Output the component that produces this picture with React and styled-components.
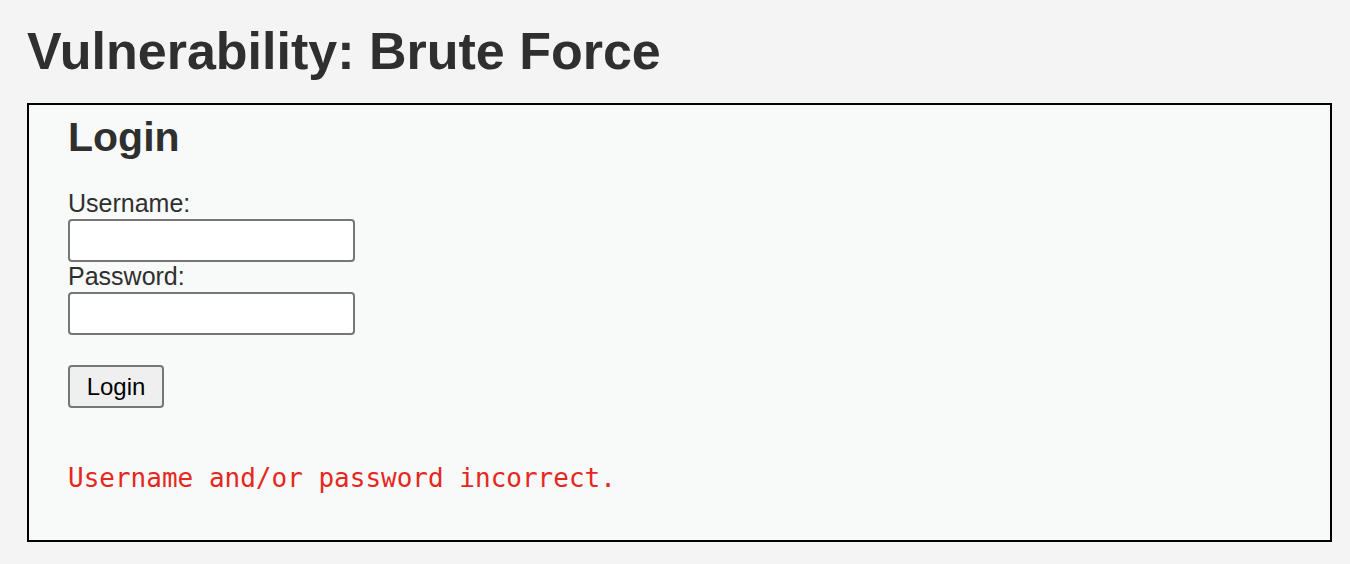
import styled, { createGlobalStyle } from 'styled-components';

const GlobalStyle = createGlobalStyle`
  html, body {
    margin: 0;
    padding: 0;
    background: #f4f4f4;
  }
  body {
    font-family: "Liberation Sans", Arial, Helvetica, sans-serif;
    color: #2f2f2f;
  }
`;

const Page = styled.div`
  padding: 21px 18px 0 27px;
`;

const Title = styled.h1`
  margin: 0 0 22px;
  font-size: 52px;
  line-height: 60px;
  font-weight: 700;
  color: #2f2f2f;
`;

const Panel = styled.div`
  border: 2px solid #000;
  background: #f8f9f9;
  padding: 8px 39px 0;
  height: 439px;
  box-sizing: border-box;
`;

const Subtitle = styled.h2`
  margin: 0 0 28px;
  font-size: 41px;
  line-height: 48px;
  font-weight: 700;
`;

const Form = styled.form`
  display: flex;
  flex-direction: column;
  align-items: flex-start;
`;

const Label = styled.label`
  display: block;
  font-size: 25px;
  line-height: 28px;
  margin-bottom: 2px;
`;

const Field = styled.input`
  width: 287px;
  height: 43px;
  box-sizing: border-box;
  border: 2px solid #767676;
  border-radius: 4px;
  background: #fff;
  margin: 0;
`;

const Button = styled.button`
  margin-top: 30px;
  height: 43px;
  width: 96px;
  box-sizing: border-box;
  border: 2px solid #767676;
  border-radius: 4px;
  background: #efefef;
  color: #000;
  font-family: "Liberation Sans", Arial, sans-serif;
  font-size: 24px;
  padding: 0;
`;

const ErrorText = styled.pre`
  margin: 55px 0 0;
  font-family: "DejaVu Sans Mono", "Liberation Mono", monospace;
  font-size: 26px;
  line-height: 30px;
  color: #e5281e;
`;

export default function App() {
  return (
    <>
      <GlobalStyle />
      <Page>
        <Title>Vulnerability: Brute Force</Title>
        <Panel>
          <Subtitle>Login</Subtitle>
          <Form onSubmit={(e) => e.preventDefault()}>
            <Label htmlFor="username">Username:</Label>
            <Field id="username" type="text" />
            <Label htmlFor="password">Password:</Label>
            <Field id="password" type="password" />
            <Button type="submit">Login</Button>
          </Form>
          <ErrorText>Username and/or password incorrect.</ErrorText>
        </Panel>
      </Page>
    </>
  );
}
